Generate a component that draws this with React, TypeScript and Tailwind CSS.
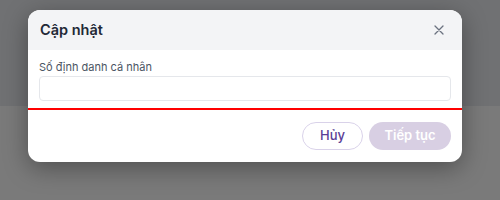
import React from "react";

export default function App() {
  return (
    <div
      className="relative w-[500px] h-[200px] overflow-hidden"
      style={{ fontFamily: "Inter, 'Noto Sans', sans-serif" }}
    >
      <div className="h-[106px] bg-[#707173]" />
      <div className="h-[94px] bg-[#7a7a7a]" />

      <div className="absolute left-[28px] top-[10px] w-[434px] rounded-[12px] bg-white overflow-hidden shadow-[0_6px_24px_rgba(0,0,0,0.35)]">
        <div className="h-[40px] bg-[#f3f4f6] flex items-center justify-between pl-[12px] pr-[18px]">
          <span className="text-[14.5px] font-semibold text-[#1f2937] leading-none">Cập nhật</span>
          <svg width="10" height="10" viewBox="0 0 10 10" fill="none">
            <path d="M1 1L9 9M9 1L1 9" stroke="#6b7280" strokeWidth="1.3" strokeLinecap="round" />
          </svg>
        </div>
        <div className="pt-[9px] px-[11px]">
          <div className="text-[11px] leading-[16px] text-[#4b5563] mb-[1px]">Số định danh cá nhân</div>
          <div className="h-[25px] rounded-[4px] border border-[#e5e7eb] bg-white" />
        </div>
        <div className="mt-[7px] h-[2px] bg-[#ff0000]" />
        <div className="flex justify-end gap-[6px] pt-[12px] pb-[12px] pr-[11px]">
          <button className="w-[61px] h-[28px] rounded-full border border-[#d9d2e9] bg-white text-[13px] font-medium text-[#5a3d96]">
            Hủy
          </button>
          <button className="w-[82px] h-[28px] rounded-full bg-[#d8cfe3] text-[13px] font-semibold text-white">
            Tiếp tục
          </button>
        </div>
      </div>
    </div>
  );
}
